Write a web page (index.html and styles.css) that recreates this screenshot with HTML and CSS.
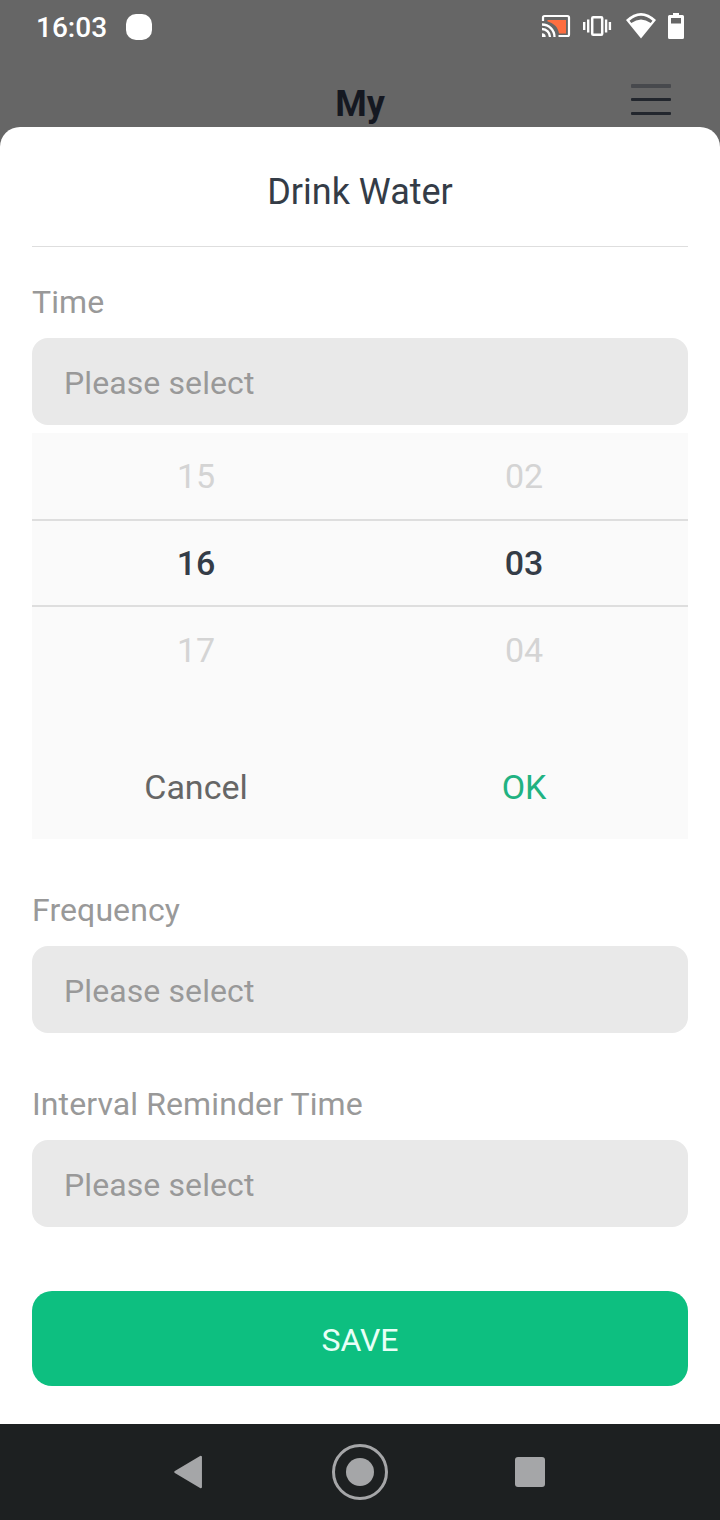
FILE: index.html
```
<!DOCTYPE html>
<html lang="en">
<head>
  <meta charset="UTF-8" />
  <meta name="viewport" content="width=device-width, initial-scale=1.0" />
  <title>Drink Water</title>
  <link rel="stylesheet" href="styles.css">
</head>
<body>
  <div class="top">
    <div class="status-bar">
      <span class="clock">16:03</span>
      <span class="notification"></span>
      <div class="status-icons">
        <!-- cast -->
        <svg width="30" height="26" viewBox="0 0 30 26">
          <path d="M6.500 7H25V20.500H18C17 14 13 10.500 6.500 8.500Z" fill="#ff6e40" />
          <path d="M2 8V4.500Q2 3 3.500 3H26.500Q28 3 28 4.500V21.500Q28 23 26.500 23H17.500" fill="none" stroke="#fff" stroke-width="2.200" />
          <path d="M1 11.500A12.500 12.500 0 0 1 13.500 24M1 16A8 8 0 0 1 9 24" fill="none" stroke="#fff" stroke-width="2.300" />
          <path d="M1 20.300A3.700 3.700 0 0 1 4.700 24H1Z" fill="#fff" />
        </svg>
        <!-- vibrate -->
        <svg width="28" height="20" viewBox="0 0 28 20">
          <rect x="9.200" y="1.200" width="10" height="17.600" rx="1" fill="none" stroke="#fff" stroke-width="2.500" />
          <path d="M1.200 6V14M5.200 3.500V16.500M23.100 3.500V16.500M26.900 6V14" stroke="#fff" stroke-width="2.400" />
        </svg>
        <!-- wifi -->
        <svg class="wifi" width="30" height="26" viewBox="0 0 30 26">
          <path d="M0 7Q15-7 30 7L15 25.500Z" fill="#fff" />
          <path d="M3.500 7.700Q15-2 26.500 7.700L24.700 10Q15 3 5.300 10Z" fill="#666" />
        </svg>
        <!-- battery -->
        <svg width="16" height="26" viewBox="0 0 16 26">
          <path d="M5 0H11V2H14.500Q16 2 16 3.500V24.500Q16 26 14.500 26H1.500Q0 26 0 24.500V3.500Q0 2 1.500 2H5Z" fill="#fff" />
          <rect x="3" y="5" width="10" height="5.500" fill="#666" />
        </svg>
      </div>
    </div>
    <div class="page-header">
      <span class="page-title">My</span>
      <div class="menu">
        <span class="menu-line faded"></span>
        <span class="menu-line"></span>
        <span class="menu-line"></span>
      </div>
    </div>
  </div>

  <div class="sheet">
    <h2 class="sheet-title">Drink Water</h2>
    <form class="reminder-form">
      <div class="form-group time-group">
        <label class="form-label">Time</label>
        <div class="form-field">Please select</div>
        <div class="picker">
          <div class="picker-row"><span>15</span><span>02</span></div>
          <div class="picker-row selected"><span>16</span><span>03</span></div>
          <div class="picker-row"><span>17</span><span>04</span></div>
          <div class="picker-actions">
            <span class="cancel">Cancel</span>
            <span class="ok">OK</span>
          </div>
        </div>
      </div>
      <div class="form-group">
        <label class="form-label">Frequency</label>
        <div class="form-field">Please select</div>
      </div>
      <div class="form-group">
        <label class="form-label">Interval Reminder Time</label>
        <div class="form-field">Please select</div>
      </div>
      <button type="button" class="save-button">SAVE</button>
    </form>
  </div>

  <div class="nav-bar">
    <div class="nav-item">
      <svg width="30" height="34" viewBox="0 0 30 34">
        <path d="M0.500 17L25.700 2V32Z" fill="#a5a6a8" stroke="#a5a6a8" stroke-width="2.500" stroke-linejoin="round" />
      </svg>
    </div>
    <div class="nav-item">
      <svg width="56" height="56" viewBox="0 0 56 56">
        <circle cx="28" cy="28" r="26.500" fill="none" stroke="#a5a6a8" stroke-width="3" />
        <circle cx="28" cy="28" r="14" fill="#a5a6a8" />
      </svg>
    </div>
    <div class="nav-item">
      <svg width="30" height="30" viewBox="0 0 30 30">
        <rect width="30" height="30" rx="3" fill="#a5a6a8" />
      </svg>
    </div>
  </div>
</body>
</html>
```

FILE: styles.css
```
* {
  box-sizing: border-box;
}
body {
  margin: 0;
  height: 1520px;
  display: flex;
  flex-direction: column;
  font-family: Roboto, "Liberation Sans", sans-serif;
  background: #666;
}
svg {
  display: block;
  overflow: visible;
}
.top {
  height: 127px;
}
.status-bar {
  height: 54px;
  padding: 0 36px;
  display: flex;
  align-items: center;
}
.clock {
  color: #fff;
  font-size: 28px;
  font-weight: 500;
  width: 90px;
}
.notification {
  width: 26px;
  height: 26px;
  border-radius: 10px;
  background: #fff;
}
.status-icons {
  margin-left: auto;
  display: flex;
  align-items: center;
  gap: 12px;
  margin-top: -2px;
}
.wifi {
  margin-left: 3px;
}
.page-header {
  height: 73px;
  padding: 30px 49px 0;
  display: grid;
  grid-template-columns: 1fr auto 1fr;
}
.page-title {
  grid-column: 2;
  color: #151821;
  font-size: 36px;
  font-weight: 700;
  line-height: 40px;
}
.menu {
  justify-self: end;
  width: 40px;
  display: flex;
  flex-direction: column;
  gap: 11px;
}
.menu-line {
  height: 3px;
  border-radius: 1px;
  background: #22262d;
}
.menu-line.faded {
  height: 4px;
  margin-bottom: -1px;
  background: #47494d;
}
.sheet {
  height: 1297px;
  padding: 0 32px;
  background: #fff;
  border-radius: 20px 20px 0 0;
}
.sheet-title {
  margin: 0;
  height: 120px;
  padding-top: 10px;
  border-bottom: 1px solid #dedede;
  color: #343c47;
  font-size: 36px;
  font-weight: 400;
  line-height: 110px;
  text-align: center;
}
.reminder-form {
  padding-top: 36px;
}
.form-group {
  margin-bottom: 52px;
}
.form-label {
  display: block;
  margin-bottom: 17px;
  color: #999;
  font-size: 32px;
  line-height: 38px;
  letter-spacing: 0.1px;
}
.form-field {
  height: 87px;
  padding: 4px 32px 0;
  border-radius: 16px;
  background: #e9e9e9;
  color: #999;
  font-size: 32px;
  line-height: 83px;
  letter-spacing: 0.1px;
}
.picker {
  height: 406px;
  margin-top: 8px;
  background: #fafafa;
}
.picker-row,
.picker-actions {
  display: grid;
  grid-template-columns: 1fr 1fr;
  text-align: center;
  font-size: 34px;
}
.picker-row {
  height: 86px;
  line-height: 86px;
  color: #d4d4d4;
}
.picker-row.selected {
  height: 88px;
  border-top: 2px solid #dedede;
  border-bottom: 2px solid #dedede;
  line-height: 85px;
  color: #343c47;
  font-weight: 500;
}
.picker-actions {
  margin-top: 50px;
  line-height: 88px;
}
.cancel {
  color: #666;
}
.ok {
  color: #21b281;
}
.save-button {
  display: block;
  width: 100%;
  height: 95px;
  margin-top: 64px;
  padding: 3px 0 0;
  border: none;
  border-radius: 20px;
  background: #0dbf80;
  color: #e8fff7;
  font-family: inherit;
  font-size: 32px;
}
.nav-bar {
  height: 96px;
  padding: 0 105px;
  background: #1d2021;
  display: grid;
  grid-template-columns: repeat(3, 1fr);
}
.nav-item {
  display: flex;
  align-items: center;
  justify-content: center;
}
```
